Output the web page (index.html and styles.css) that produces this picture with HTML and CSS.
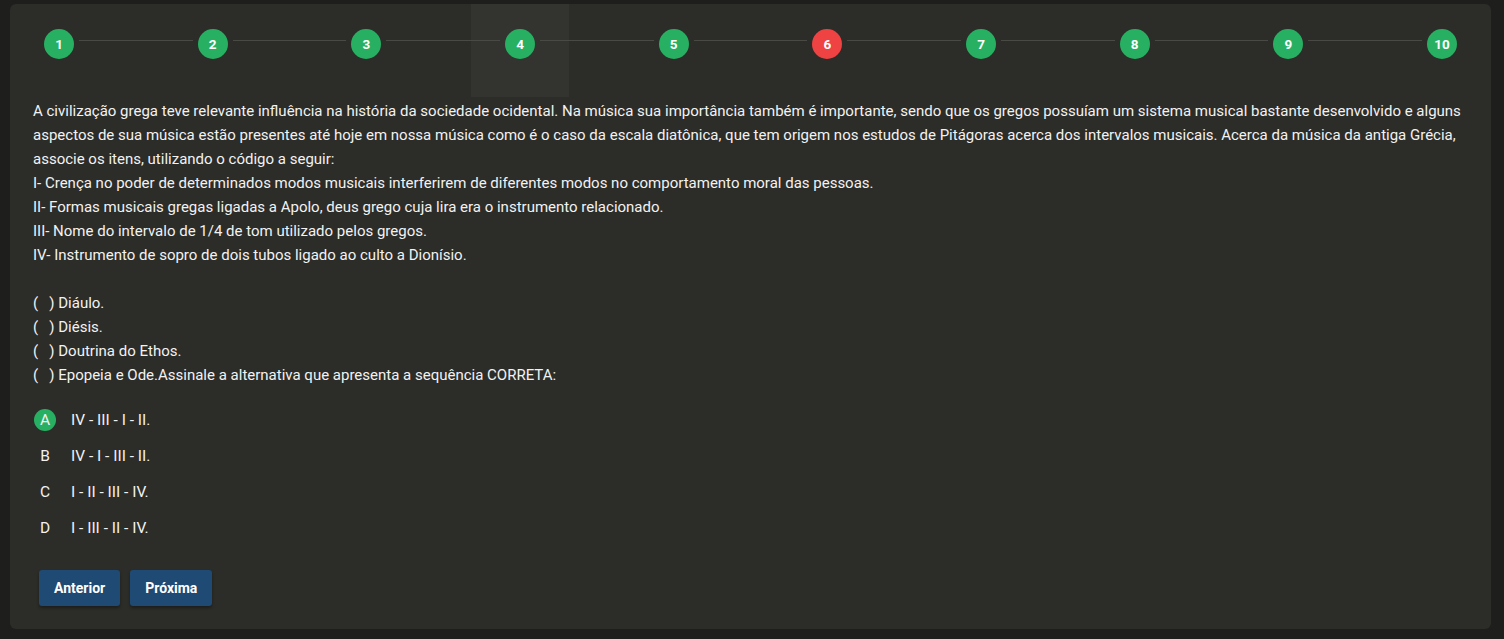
FILE: index.html
```html
<!DOCTYPE html>
<html lang="pt-BR">
<head>
<meta charset="utf-8">
<title>Questão</title>
<link rel="stylesheet" href="styles.css">
</head>
<body>
<main class="card">
  <nav class="stepper">
    <div class="step first"><span class="half"></span><span class="dot ok">1</span><span class="half"></span></div>
    <div class="link"></div>
    <div class="step"><span class="half"></span><span class="dot ok">2</span><span class="half"></span></div>
    <div class="link"></div>
    <div class="step"><span class="half"></span><span class="dot ok">3</span><span class="half"></span></div>
    <div class="link"></div>
    <div class="step current"><span class="half"></span><span class="dot ok">4</span><span class="half"></span></div>
    <div class="link"></div>
    <div class="step"><span class="half"></span><span class="dot ok">5</span><span class="half"></span></div>
    <div class="link"></div>
    <div class="step"><span class="half"></span><span class="dot bad">6</span><span class="half"></span></div>
    <div class="link"></div>
    <div class="step"><span class="half"></span><span class="dot ok">7</span><span class="half"></span></div>
    <div class="link"></div>
    <div class="step"><span class="half"></span><span class="dot ok">8</span><span class="half"></span></div>
    <div class="link"></div>
    <div class="step"><span class="half"></span><span class="dot ok">9</span><span class="half"></span></div>
    <div class="link"></div>
    <div class="step last"><span class="half"></span><span class="dot ok">10</span><span class="half"></span></div>
  </nav>

  <section class="content">
    <div class="statement">
      <p>A civilização grega teve relevante influência na história da sociedade ocidental. Na música sua importância também é importante, sendo que os gregos possuíam um sistema musical bastante desenvolvido e alguns aspectos de sua música estão presentes até hoje em nossa música como é o caso da escala diatônica, que tem origem nos estudos de Pitágoras acerca dos intervalos musicais. Acerca da música da antiga Grécia, associe os itens, utilizando o código a seguir:<br>I- Crença no poder de determinados modos musicais interferirem de diferentes modos no comportamento moral das pessoas.<br>II- Formas musicais gregas ligadas a Apolo, deus grego cuja lira era o instrumento relacionado.<br>III- Nome do intervalo de 1/4 de tom utilizado pelos gregos.<br>IV- Instrumento de sopro de dois tubos ligado ao culto a Dionísio.<br><br>(&nbsp;&nbsp;&nbsp;) Diáulo.<br>(&nbsp;&nbsp;&nbsp;) Diésis.<br>(&nbsp;&nbsp;&nbsp;) Doutrina do Ethos.<br>(&nbsp;&nbsp;&nbsp;) Epopeia e Ode.Assinale a alternativa que apresenta a sequência CORRETA:</p>
    </div>

    <ul class="options">
      <li class="option selected"><span class="letter">A</span><span class="opt-text">IV - III - I - II.</span></li>
      <li class="option"><span class="letter">B</span><span class="opt-text">IV - I - III - II.</span></li>
      <li class="option"><span class="letter">C</span><span class="opt-text">I - II - III - IV.</span></li>
      <li class="option"><span class="letter">D</span><span class="opt-text">I - III - II - IV.</span></li>
    </ul>

    <div class="actions">
      <button class="btn">Anterior</button>
      <button class="btn">Próxima</button>
    </div>
  </section>
</main>
</body>
</html>
```
FILE: styles.css
```css
html, body {
  margin: 0;
  padding: 0;
  background: #1e1e1d;
}
body {
  padding: 4px 13px 10px 10px;
  font-family: "Roboto", "Open Sans", sans-serif;
  color: #f2f2f2;
}
.card {
  background: #2c2c28;
  border-radius: 6px;
  padding-bottom: 23px;
}
.stepper {
  display: flex;
  height: 93px;
}
.step {
  width: 98px;
  flex: 0 0 98px;
  display: flex;
  align-items: flex-start;
  gap: 5px;
  padding-top: 25px;
  box-sizing: border-box;
}
.step.current {
  background: #33332f;
}
.half {
  flex: 1;
  height: 1px;
  margin-top: 11px;
  background: #4a4a45;
}
.step.first .half:first-child,
.step.last .half:last-child {
  visibility: hidden;
}
.link {
  flex: 1;
  height: 1px;
  margin-top: 36px;
  background: #4a4a45;
}
.dot {
  width: 30px;
  height: 30px;
  flex: 0 0 30px;
  border-radius: 50%;
  display: flex;
  align-items: center;
  justify-content: center;
  font-weight: 700;
  font-size: 13.5px;
  color: #fff;
}
.dot.ok { background: #27b062; }
.dot.bad { background: #ef4242; }

.content {
  padding: 2px 15px 0 23px;
}
.statement p {
  margin: 0;
  font-size: 15px;
  line-height: 24px;
}
.options {
  list-style: none;
  margin: 15px 0 0;
  padding: 0;
}
.option {
  display: flex;
  align-items: center;
  height: 36px;
  font-size: 15.5px;
}
.letter {
  width: 22px;
  height: 22px;
  margin-left: 1px;
  border-radius: 50%;
  display: flex;
  align-items: center;
  justify-content: center;
  font-size: 15.5px;
}
.option.selected .letter {
  background: #27b062;
}
.opt-text {
  margin-left: 15px;
}
.actions {
  display: flex;
  gap: 10px;
  margin-top: 24px;
  padding-left: 6px;
}
.btn {
  height: 36px;
  padding: 0 15px;
  border: 0;
  border-radius: 3px;
  background: #1f4a73;
  color: #fff;
  font-family: "Roboto", sans-serif;
  font-weight: 700;
  font-size: 14px;
  box-shadow: 0 2px 3px rgba(0,0,0,0.35);
}
```
